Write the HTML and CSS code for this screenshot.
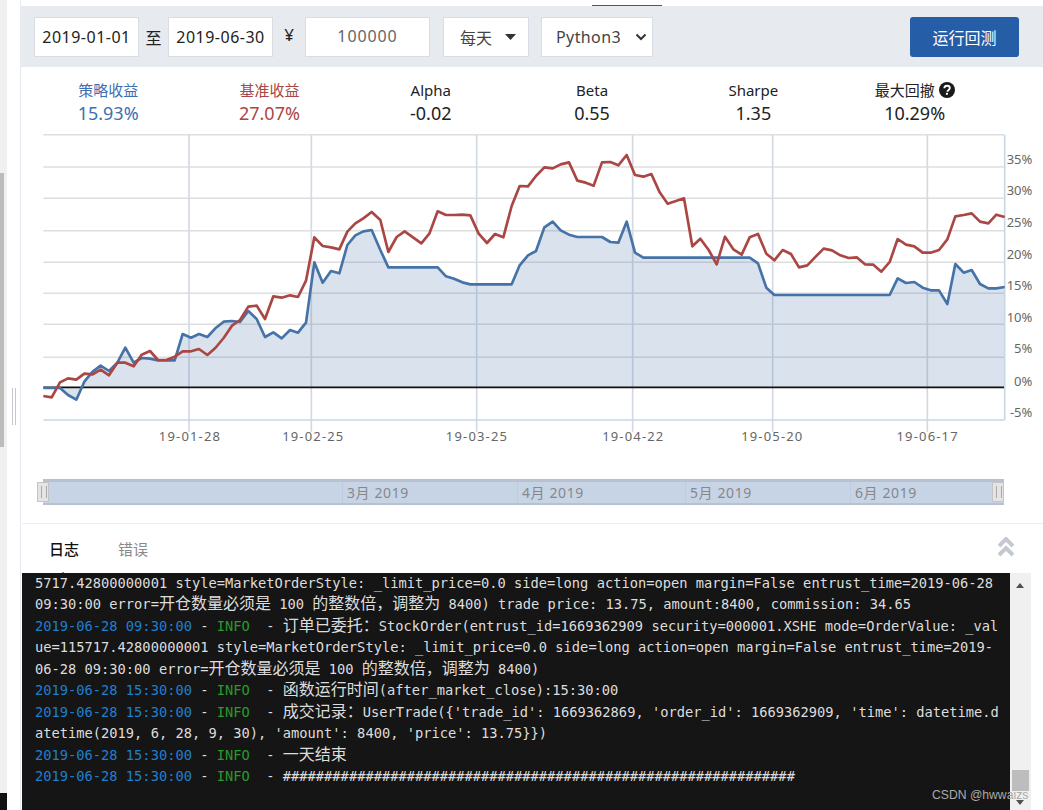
FILE: index.html
```html
<!DOCTYPE html>
<html lang="zh">
<head>
<meta charset="utf-8">
<title>回测</title>
<link rel="stylesheet" href="styles.css">
</head>
<body>
<div class="page">
  <div class="rail"><div class="rail-thumb"></div><div class="rail-end"></div></div>
  <div class="gutter"><div class="grip"></div></div>
  <div class="main">
    <div class="topline"><span class="top-mark"></span></div>
    <div class="toolbar">
      <div class="field date">2019-01-01</div>
      <span class="sep">至</span>
      <div class="field date">2019-06-30</div>
      <span class="yen">¥</span>
      <div class="field money">100000</div>
      <div class="field freq">每天<svg class="caret" width="11" height="6" viewBox="0 0 11 6"><path d="M0 0h11L5.500 6z"/></svg></div>
      <div class="field lang">Python3<svg class="chev" width="12" height="8" viewBox="0 0 12 8"><path d="M1.500 1.500 6 6l4.500-4.500"/></svg></div>
      <button class="run">运行回测</button>
    </div>
    <div class="stats">
      <div class="stat blue"><div class="k">策略收益</div><div class="v">15.93%</div></div>
      <div class="stat red"><div class="k">基准收益</div><div class="v">27.07%</div></div>
      <div class="stat"><div class="k">Alpha</div><div class="v">-0.02</div></div>
      <div class="stat"><div class="k">Beta</div><div class="v">0.55</div></div>
      <div class="stat"><div class="k">Sharpe</div><div class="v">1.35</div></div>
      <div class="stat"><div class="k">最大回撤 <svg class="help" width="16" height="16" viewBox="0 0 16 16"><circle cx="8" cy="8" r="8" fill="#1a1a1a"/><path d="M5.300 6.200C5.400 4.500 6.600 3.700 8.100 3.700c1.600 0 2.700 1 2.700 2.300 0 1.200-.7 1.700-1.500 2.300-.6.400-.8.700-.8 1.400" fill="none" stroke="#fff" stroke-width="1.900"/><rect x="6.900" y="10.800" width="2" height="2" fill="#fff"/></svg></div><div class="v">10.29%</div></div>
    </div>
    <svg class="chart" width="1022" height="320" viewBox="63 0 3066 960">
      <g class="hgrid">
        <path d="M130 14H3012M130 111H3012M130 205H3012M130 302H3012M130 397H3012M130 490H3012M130 583H3012M130 682H3012"/>
      </g>
      <path class="vgrid" d="M567 14V905M934 14V905M1430 14V905M1898 14V905M2318 14V905M2782 14V905"/>
      <path class="area" d="M130 772L130 774 180 774 204 795 229 809 253 755 278 725 302 707 327 723 352 698 376 653 401 698 425 684 450 686 474 691 499 691 524 691 548 612 573 623 597 612 622 621 646 595 671 575 696 573 720 576 745 543 770 567 795 621 820 607 845 625 870 600 894 608 918 578 943 397 968 458 993 423 1018 430 1042 345 1066 316 1090 304 1115 300 1141 360 1165 412 1313 412 1338 439 1362 446 1387 457 1411 463 1535 463 1559 406 1584 376 1608 363 1633 292 1658 275 1682 301 1707 314 1732 321 1806 321 1831 336 1855 338 1880 275 1905 368 1930 383 2249 383 2274 400 2299 473 2323 495 2669 495 2693 445 2718 459 2743 456 2768 473 2792 481 2817 481 2842 522 2866 402 2891 428 2915 420 2940 462 2965 475 2989 475 3014 471 3014 772Z"/>
      <path class="axis" d="M130 870H3014M3014 14V870"/>
      <path class="zero" d="M130 772H3012"/>
      <polyline class="line l-blue" points="130,774 180,774 204,795 229,809 253,755 278,725 302,707 327,723 352,698 376,653 401,698 425,684 450,686 474,691 499,691 524,691 548,612 573,623 597,612 622,621 646,595 671,575 696,573 720,576 745,543 770,567 795,621 820,607 845,625 870,600 894,608 918,578 943,397 968,458 993,423 1018,430 1042,345 1066,316 1090,304 1115,300 1141,360 1165,412 1313,412 1338,439 1362,446 1387,457 1411,463 1535,463 1559,406 1584,376 1608,363 1633,292 1658,275 1682,301 1707,314 1732,321 1806,321 1831,336 1855,338 1880,275 1905,368 1930,383 2249,383 2274,400 2299,473 2323,495 2669,495 2693,445 2718,459 2743,456 2768,473 2792,481 2817,481 2842,522 2866,402 2891,428 2915,420 2940,462 2965,475 2989,475 3014,471"/>
      <polyline class="line l-red" points="130,798 155,802 180,757 204,745 229,749 253,731 278,733 302,719 327,736 352,698 376,698 401,709 425,674 450,663 474,690 499,690 524,680 548,664 573,664 597,657 622,675 646,654 671,624 696,587 720,570 745,530 770,527 795,567 820,499 845,503 870,496 894,501 918,452 943,322 968,348 993,352 1018,358 1042,305 1066,280 1090,265 1115,246 1141,270 1165,366 1190,321 1214,304 1239,322 1264,340 1288,311 1313,244 1338,255 1362,255 1387,254 1411,256 1436,311 1461,339 1485,312 1510,322 1535,228 1559,168 1584,169 1608,138 1633,112 1658,115 1682,103 1707,97 1732,152 1757,158 1781,167 1806,97 1831,96 1855,106 1880,75 1905,135 1930,140 1954,132 1979,187 2003,221 2028,213 2052,205 2077,349 2101,326 2126,360 2150,403 2175,320 2200,358 2225,374 2249,322 2274,312 2299,371 2323,391 2348,360 2373,372 2397,412 2422,406 2447,380 2471,356 2496,361 2521,376 2546,384 2570,382 2595,403 2620,404 2644,425 2669,396 2693,327 2718,344 2743,349 2768,368 2792,368 2817,360 2842,328 2866,259 2891,255 2915,250 2940,275 2965,280 2989,254 3014,261"/>
      <g class="ylabels">
        <text x="3097" y="101">35%</text>
        <text x="3097" y="196">30%</text>
        <text x="3097" y="292">25%</text>
        <text x="3097" y="386">20%</text>
        <text x="3097" y="481">15%</text>
        <text x="3097" y="575">10%</text>
        <text x="3097" y="670">5%</text>
        <text x="3097" y="767">0%</text>
        <text x="3097" y="861">-5%</text>
      </g>
      <g class="xlabels">
        <text x="570" y="933">19-01-28</text>
        <text x="940" y="933">19-02-25</text>
        <text x="1431" y="933">19-03-25</text>
        <text x="1900" y="933">19-04-22</text>
        <text x="2317" y="933">19-05-20</text>
        <text x="2783" y="933">19-06-17</text>
      </g>
    </svg>
    <div class="navwrap">
      <div class="navigator">
        <span class="handle left"></span>
        <span class="month m3">3月 2019</span>
        <span class="month m4">4月 2019</span>
        <span class="month m5">5月 2019</span>
        <span class="month m6">6月 2019</span>
        <span class="handle right"></span>
      </div>
    </div>
    <div class="tabs">
      <span class="tab on">日志</span>
      <span class="tab">错误</span>
      <svg class="collapse" width="16" height="20" viewBox="0 0 16 20"><path d="M1 9 8 2l7 7M1 18l7-7 7 7"/></svg>
    </div>
    <div class="logbox">
      <div class="log">
        <div>5717.42800000001 style=MarketOrderStyle: _limit_price=0.0 side=long action=open margin=False entrust_time=2019-06-28</div>
        <div>09:30:00 error=<span class="cn">开仓数量必须是</span> 100 <span class="cn">的整数倍，调整为</span> 8400) trade price: 13.75, amount:8400, commission: 34.65</div>
        <div><span class="ts">2019-06-28 09:30:00</span> - <span class="lv">INFO</span>  - <span class="cn">订单已委托：</span>StockOrder(entrust_id=1669362909 security=000001.XSHE mode=OrderValue: _val</div>
        <div>ue=115717.42800000001 style=MarketOrderStyle: _limit_price=0.0 side=long action=open margin=False entrust_time=2019-</div>
        <div>06-28 09:30:00 error=<span class="cn">开仓数量必须是</span> 100 <span class="cn">的整数倍，调整为</span> 8400)</div>
        <div><span class="ts">2019-06-28 15:30:00</span> - <span class="lv">INFO</span>  - <span class="cn">函数运行时间</span>(after_market_close):15:30:00</div>
        <div><span class="ts">2019-06-28 15:30:00</span> - <span class="lv">INFO</span>  - <span class="cn">成交记录：</span>UserTrade({'trade_id': 1669362869, 'order_id': 1669362909, 'time': datetime.d</div>
        <div>atetime(2019, 6, 28, 9, 30), 'amount': 8400, 'price': 13.75}})</div>
        <div><span class="ts">2019-06-28 15:30:00</span> - <span class="lv">INFO</span>  - <span class="cn">一天结束</span></div>
        <div><span class="ts">2019-06-28 15:30:00</span> - <span class="lv">INFO</span>  - ##############################################################</div>
      </div>
      <div class="sbar">
        <span class="arrow up"></span>
        <span class="thumb"></span>
        <span class="arrow down"></span>
      </div>
    </div>
  </div>
</div>
<div class="watermark">CSDN @hwwaizs</div>
</body>
</html>
```
FILE: styles.css
```css
* { box-sizing: border-box; }
html, body { margin: 0; height: 810px; overflow: hidden; background: #fff; }
body { font-family: "Noto Sans", "Noto Sans CJK SC", sans-serif; color: #222; }
.page { display: flex; height: 810px; }
.rail { width: 7px; background: #f0f0f0; display: flex; flex-direction: column; flex: none; }
.rail-thumb { width: 4px; height: 274px; margin-top: 173px; background: #bcbcbc; }
.rail-end { margin-top: auto; height: 17px; background: #111; }
.gutter { width: 13px; flex: none; padding-top: 388px; padding-left: 5px; }
.grip { width: 4px; height: 37px; border-left: 1px solid #c4c8d0; border-right: 1px solid #c4c8d0; }
.main { flex: 1; min-width: 0; display: flex; flex-direction: column; border-left: 1px solid #e6e9f0; }
.topline { height: 6px; position: relative; }
.top-mark { display: block; width: 70px; height: 1px; margin: 5px 0 0 571px; background: #265da7; }
.toolbar { height: 61px; background: #e7eaef; display: flex; align-items: center; padding: 0 24px 0 14px; margin-left: -1px; }
.field { height: 40px; background: #fff; border: 1px solid #d8dde3; display: flex; align-items: center; font-size: 16px; color: #333; }
.date { width: 105px; justify-content: center; letter-spacing: .5px; color: #222; }
.sep { width: 29px; text-align: center; font-size: 16px; }
.yen { width: 32px; text-align: center; font-size: 17px; margin-top: -4px; }
.money { width: 125px; justify-content: center; color: #666; letter-spacing: .9px; padding-bottom: 2px; }
.freq { width: 86px; margin-left: 13px; padding-left: 16px; color: #444; }
.caret { margin-left: 13px; fill: #333; }
.lang { width: 112px; margin-left: 12px; padding-left: 14px; color: #444; letter-spacing: .4px; }
.chev { margin-left: 14px; fill: none; stroke: #333; stroke-width: 2; }
.run { width: 109px; height: 40px; margin-left: auto; border: 0; border-radius: 3px; background: #265da7; color: #fff; font: 16px "Noto Sans CJK SC", sans-serif; }
.stats { height: 68px; display: grid; grid-template-columns: repeat(6, 161.3px); padding: 13px 0 0 6.500px; text-align: center; }
.k { font-size: 15px; line-height: 20px; color: #222; }
.v { font-size: 18px; line-height: 26px; color: #222; }
.help { vertical-align: -2px; }
.blue .k, .blue .v { color: #3d6fb0; }
.red .k, .red .v { color: #aa4643; }
.chart { display: block; flex: none; margin-top: -5px; height: 320px; }
.hgrid path { fill: none; stroke: #dedede; stroke-width: 4.500; }
.vgrid { fill: none; stroke: #d3d9e4; stroke-width: 5; }
.area { fill: rgba(69, 114, 167, .2); }
.axis { fill: none; stroke: #c8d6e6; stroke-width: 5; }
.zero { fill: none; stroke: #111; stroke-width: 5; }
.line { fill: none; stroke-width: 8; stroke-linejoin: round; }
.l-blue { stroke: #4572a7; }
.l-red { stroke: #aa4643; }
.ylabels text { font-size: 39px; fill: #666; text-anchor: end; }
.xlabels text { font-size: 39px; fill: #666; text-anchor: middle; letter-spacing: 3.500px; }
.navwrap { height: 73px; padding: 29px 0 0 22px; }
.navigator { position: relative; width: 961px; height: 26px; background: #c6d4e6; border-top: 3px solid #b9c0cf; border-bottom: 2px solid #b9c0cf; }
.handle { position: absolute; top: 0; width: 12px; height: 20px; background: #e4e4e4; border: 1px solid #c4c4c4; }
.handle::after { content: ""; position: absolute; left: 3px; top: 3px; width: 4px; height: 12px; border-left: 1px solid #aaa; border-right: 1px solid #aaa; }
.handle.left { left: -6px; }
.handle.right { right: 0; }
.month { position: absolute; top: 0; padding-left: 4px; line-height: 21px; font-size: 14px; letter-spacing: .6px; color: #888; border-left: 1px solid #bccbdf; }
.m3 { left: 299px; }
.m4 { left: 474px; }
.m5 { left: 642px; }
.m6 { left: 807px; }
.tabs { height: 50px; margin-left: 1px; border-top: 1px solid #eee; display: flex; align-items: center; padding-left: 27px; gap: 39px; position: relative; flex: none; }
.tab { font-size: 15px; color: #888; }
.tab.on { color: #111; position: relative; font-weight: 500; }
.tab.on::after { content: ""; position: absolute; left: 8px; top: 34px; border: 6px solid transparent; border-top: 0; border-bottom-color: #151515; }
.collapse { position: absolute; right: 29px; top: 13px; fill: none; stroke: #c3c8d2; stroke-width: 4; }
.logbox { flex: 1; min-height: 0; display: flex; margin-left: 1px; }
.log { width: 988px; background: #151515; color: #ddd; font: 13.72px/21.45px "DejaVu Sans Mono", "Noto Sans CJK SC", monospace; padding: 0 0 0 13px; overflow: hidden; }
.log div { height: 21.45px; white-space: pre; }
.cn { font-family: "Noto Sans CJK SC", sans-serif; font-size: 16px; line-height: 1; }
.ts { color: #1f7fcf; }
.lv { color: #2a9a2a; }
.sbar { width: 21px; flex: none; background: #f0f0f0; position: relative; }
.arrow { position: absolute; left: 6px; border: 4.500px solid transparent; border-top: 0; border-bottom: 5px solid #505050; }
.arrow.up { top: 10px; }
.arrow.down { bottom: 5px; transform: rotate(180deg); }
.thumb { position: absolute; left: 2px; bottom: 19px; width: 17px; height: 21px; background: #bdbdbd; }
.watermark { position: absolute; left: 932px; top: 787px; font: 12.200px/16px "Liberation Sans", sans-serif; color: #aaa; }
```
